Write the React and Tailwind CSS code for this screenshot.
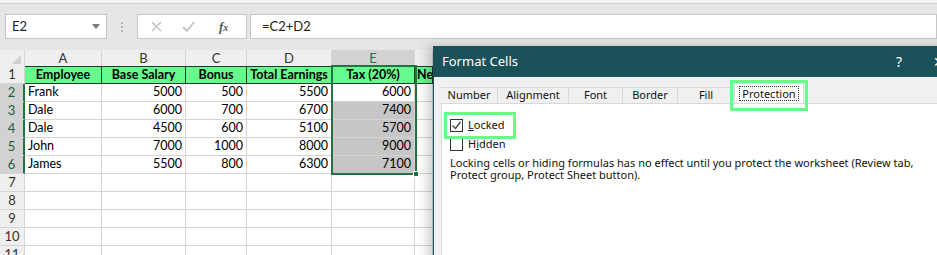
import React from 'react';

const cols = [
    { key: 'A', w: 'w-[77px]' },
    { key: 'B', w: 'w-[84px]' },
    { key: 'C', w: 'w-[61px]' },
    { key: 'D', w: 'w-[85px]' },
    { key: 'E', w: 'w-[83px]' },
    { key: 'F', w: 'w-[18px]' },
];

const header = ['Employee', 'Base Salary', 'Bonus', 'Total Earnings', 'Tax (20%)', 'Net Pay'];

const rows = [
    ['Frank', 5000, 500, 5500, 6000],
    ['Dale', 6000, 700, 6700, 7400],
    ['Dale', 4500, 600, 5100, 5700],
    ['John', 7000, 1000, 8000, 9000],
    ['James', 5500, 800, 6300, 7100],
];

const tabs = [
    { label: 'Number', w: 'w-[57px]' },
    { label: 'Alignment', w: 'w-[71px]' },
    { label: 'Font', w: 'w-[54px]' },
    { label: 'Border', w: 'w-[55px]' },
    { label: 'Fill', w: 'w-[57px]' },
];

const FormulaBar = () => {
    return (
        <div className="bg-[#e6e6e6] border-t border-[#d2d2d2] h-[44px] flex items-start pt-[10px] pl-[5px] gap-0">
            <div className="w-[102px] h-[25px] bg-white border border-[#c6c6c6] flex items-center justify-between pl-[6px] pr-[6px] text-[13px] text-[#222]">
                <span>E2</span>
                <svg width="8" height="5" viewBox="0 0 8 5"><path d="M0 0h8L4 5z" fill="#7a7a7a" /></svg>
            </div>
            <div className="w-[30px] h-[25px] flex flex-col items-center justify-center gap-[2px]">
                <span className="w-[2px] h-[2px] bg-[#b5b5b5]" />
                <span className="w-[2px] h-[2px] bg-[#b5b5b5]" />
                <span className="w-[2px] h-[2px] bg-[#b5b5b5]" />
            </div>
            <div className="w-[110px] h-[25px] bg-white border border-[#c6c6c6] flex items-center">
                <svg className="ml-[13px]" width="11" height="11" viewBox="0 0 11 11"><path d="M1 1l9 9M10 1l-9 9" stroke="#c4c4c4" strokeWidth="1.6" /></svg>
                <svg className="ml-[20px]" width="13" height="11" viewBox="0 0 13 11"><path d="M1 6l4 4 7-9" stroke="#c4c4c4" strokeWidth="1.8" fill="none" /></svg>
                <span className="ml-[24px] text-[13px] italic text-[#555] font-['Liberation_Serif',serif] font-bold">f<span className="text-[10px]">x</span></span>
            </div>
            <div className="ml-[3px] flex-1 h-[25px] bg-white border border-[#c6c6c6] flex items-center pl-[11px] text-[13px] text-[#222]">
                =C2+D2
            </div>
        </div>
    );
};

const Sheet = () => {
    return (
        <div className="font-['Lato',sans-serif] text-[12.5px] text-black bg-[#e6e6e6]">
            {/* column headers */}
            <div className="flex h-[19px] pt-[3px]">
                <div className="w-[25px] h-[16px] bg-[#efefef] border-r border-[#d4d4d4] flex items-end justify-end pr-[3px] pb-[2px]">
                    <svg width="9" height="9" viewBox="0 0 9 9"><path d="M9 0v9H0z" fill="#cfcfcf" /></svg>
                </div>
                {cols.map((c) => (
                    <div
                        key={c.key}
                        className={`${c.w} h-[16px] border-r border-[#d4d4d4] flex items-center justify-center leading-none text-[13px] overflow-hidden ${c.key === 'E' ? 'bg-[#d2d2d2] text-[#217346]' : 'bg-[#efefef] text-[#333]'}`}
                    >
                        {c.key === 'F' ? '' : c.key}
                    </div>
                ))}
            </div>

            {/* row 1 */}
            <div className="flex h-[18px]">
                <div className="w-[25px] bg-[#efefef] border-r border-b border-[#d4d4d4] flex items-center justify-center text-[13px] text-[#333]">1</div>
                {cols.map((c, i) => (
                    <div
                        key={c.key}
                        className={`${c.w} bg-[#66fb8d] border border-l-0 border-[#1d3b2a] flex items-center font-bold whitespace-nowrap overflow-hidden ${i === 5 ? 'justify-start pl-[2px]' : 'justify-center'}`}
                    >
                        {i === 5 ? 'Ne' : header[i]}
                    </div>
                ))}
            </div>

            {/* data rows */}
            {Array.from({ length: 10 }).map((_, r) => {
                const data = rows[r];
                const selected = r < 5;
                return (
                    <div key={r} className="flex h-[18px]">
                        <div className={`w-[25px] border-b border-[#d4d4d4] flex items-center justify-center text-[13px] ${selected ? 'bg-[#d2d2d2] text-[#1f5e3b] border-r-2 border-r-[#217346]' : 'bg-[#efefef] text-[#333] border-r'}`}>
                            {r + 2}
                        </div>
                        {cols.map((c, i) => {
                            let bg = 'bg-white';
                            if (i === 4 && r > 0 && r < 5) bg = 'bg-[#c6c6c6]';
                            const val = data && i < 5 ? data[i] : '';
                            return (
                                <div
                                    key={c.key}
                                    className={`${c.w} ${bg} border-r border-b border-[#d4d4d4] flex items-center whitespace-nowrap overflow-hidden ${i === 0 ? 'justify-start pl-[3px]' : 'justify-end pr-[3px]'}`}
                                >
                                    {val}
                                </div>
                            );
                        })}
                    </div>
                );
            })}
        </div>
    );
};

const Checkbox = ({ checked }) => (
    <span className="w-[13px] h-[13px] border border-[#333] bg-white flex items-center justify-center">
        {checked && (
            <svg width="11" height="11" viewBox="0 0 11 11"><path d="M1.5 5.5l3 3 5-6.5" stroke="#444" strokeWidth="1.3" fill="none" /></svg>
        )}
    </span>
);

const FormatCells = () => {
    return (
        <div className="absolute left-[433px] top-[46px] w-[520px] h-[230px] bg-[#f0f0f0] border-l border-[#1b5159] shadow-[-6px_0_10px_rgba(0,0,0,0.18)] font-['Noto_Sans',sans-serif]">
            <div className="h-[31px] bg-[#1b525a] flex items-center pl-[8px] text-white text-[13px]">
                <span className="flex-1">Format Cells</span>
                <span className="w-[37px] text-[14px]">?</span>
                <span className="w-[20px] text-[14px] overflow-hidden whitespace-nowrap">✕</span>
            </div>
            <div className="pt-[10px] pl-[7px]">
                <div className="flex items-end h-[16px]">
                    {tabs.map((t) => (
                        <div key={t.label} className={`${t.w} h-[16px] border-t border-r border-[#d9d9d9] flex items-center justify-center text-[11px] text-[#111]`}>
                            {t.label}
                        </div>
                    ))}
                    <div className="relative -ml-[1px] w-[70px] h-[20px] bg-white border border-b-0 border-[#d9d9d9] flex items-center justify-center text-[11px] text-[#111]">
                        <span className="border border-dotted border-[#333] px-[2px] leading-[13px]">Protection</span>
                        <div className="absolute -left-[5px] -top-[4px] w-[78px] h-[31px] border-[3px] border-[#66ff8a]" />
                    </div>
                </div>
                <div className="bg-white border-l border-t border-[#d9d9d9] h-[160px] pl-[8px] pt-[15px] text-[11px] text-[#111]">
                    <div className="relative flex items-center gap-[5px] h-[12px]">
                        <Checkbox checked />
                        <span><span className="underline">L</span>ocked</span>
                        <div className="absolute -left-[6px] -top-[7px] w-[72px] h-[27px] border-[3px] border-[#66ff8a]" />
                    </div>
                    <div className="flex items-center gap-[5px] h-[12px] mt-[7px]">
                        <Checkbox />
                        <span>H<span className="underline">i</span>dden</span>
                    </div>
                    <p className="mt-[7px] leading-[12px] w-[470px]">
                        Locking cells or hiding formulas has no effect until you protect the worksheet (Review tab, Protect group, Protect Sheet button).
                    </p>
                </div>
            </div>
        </div>
    );
};

const App = () => {
    return (
        <div className="relative w-[937px] h-[255px] overflow-hidden bg-[#e6e6e6] font-['Lato',sans-serif]">
            <div className="h-[3px] bg-[#f3f3f3]" />
            <FormulaBar />
            <Sheet />

            {/* selection outline E1:E6 */}
            <div className="absolute left-[331px] top-[65px] w-[86px] h-[110px] border-2 border-[#217346]" />
            <div className="absolute left-[413px] top-[171px] w-[6px] h-[6px] bg-[#217346] border border-white" />

            <FormatCells />
        </div>
    );
};

export default App;
